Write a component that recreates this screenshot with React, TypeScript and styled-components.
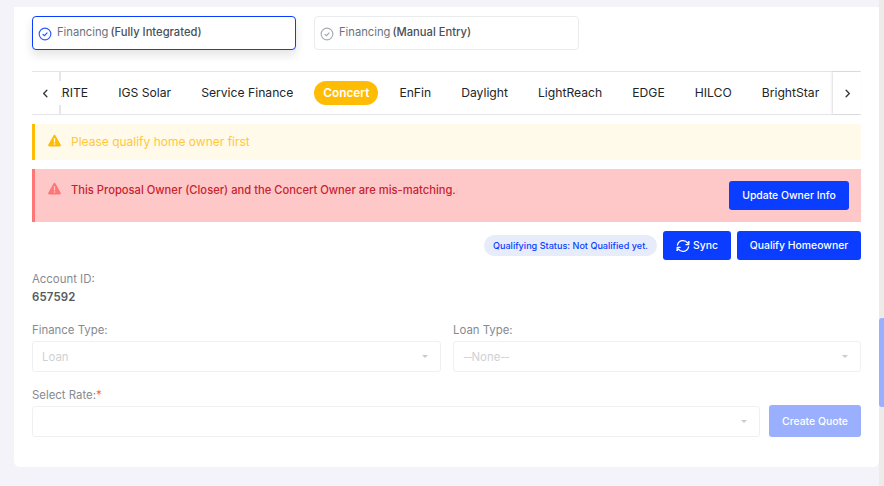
import React from "react";
import styled, { createGlobalStyle } from "styled-components";

const Global = createGlobalStyle`
  html, body { margin: 0; padding: 0; height: 486px; overflow: hidden; background: #f3f3f9; }
  * { box-sizing: border-box; }
  body { font-family: Inter, "Liberation Sans", sans-serif; }
`;

const Page = styled.div`
  display: flex;
  width: 884px;
  height: 486px;
  padding: 7px 0 19px 14px;
`;
const Card = styled.main`
  width: 865px;
  height: 460px;
  background: #fff;
  border-radius: 0 0 6px 6px;
  padding: 9px 18px 0;
  display: flex;
  flex-direction: column;
`;
const Scrollbar = styled.div`
  width: 5px;
  height: 486px;
  margin-top: -7px;
  background: #ecebe9;
  padding-top: 318px;
`;
const Thumb = styled.div`
  height: 89px;
  background: #9ab0ff;
  border-radius: 3px 0 0 3px;
`;
const Options = styled.div`
  display: flex;
  gap: 18px;
`;
const Option = styled.div<{ $active?: boolean }>`
  width: 265px;
  height: 34px;
  display: flex;
  align-items: center;
  gap: 5px;
  padding: 0 5px 2px 5px;
  border-radius: 4px;
  font-size: 11.2px;
  background: #fff;
  border: 1px solid ${(p) => (p.$active ? "#0a3dff" : "#e9ebec")};
  box-shadow: ${(p) => (p.$active ? "0 5px 10px rgba(30,32,37,.12)" : "none")};
  color: #6b7280;
  &:first-child { width: 264px; }
`;
const OptionIcon = styled.svg`
  width: 14px;
  height: 14px;
  margin-top: 3px;
  flex: none;
`;
const OptionBold = styled.span`
  color: #495057;
  font-weight: 500;
  margin-left: -3px;
`;
const TabBar = styled.nav`
  margin-top: 21px;
  height: 44px;
  border-top: 1px solid #e3e4e7;
  border-bottom: 1px solid #e3e4e7;
  display: flex;
  align-items: stretch;
`;
const Arrow = styled.div<{ $side: "left" | "right" }>`
  width: ${(p) => (p.$side === "left" ? 27 : 28)}px;
  flex: none;
  display: flex;
  align-items: center;
  justify-content: center;
  padding-left: ${(p) => (p.$side === "left" ? 0 : 1)}px;
  position: relative;
  z-index: 1;
  box-shadow: ${(p) => (p.$side === "right" ? "-1px 0 2px rgba(0,0,0,.14)" : "none")};
  background: #fff;
`;
const LeftEdge = styled.div`
  width: 2px;
  flex: none;
  background: linear-gradient(#e6e6e6 0 9px, #fff 9px 33px, #e6e6e6 33px);
`;
const TabTrack = styled.div`
  flex: 1;
  overflow: hidden;
  display: flex;
  align-items: center;
`;
const TabList = styled.div`
  display: flex;
  align-items: center;
  margin-left: -15px;
`;
const Tab = styled.div<{ $active?: boolean }>`
  font-size: ${(p) => (p.$active ? 11.8 : 12.16)}px;
  font-weight: ${(p) => (p.$active ? 600 : 400)};
  line-height: 24px;
  height: 24px;
  white-space: nowrap;
  padding: 0 9px;
  margin-right: 12px;
  border-radius: 12px;
  color: ${(p) => (p.$active ? "#fff" : "#212529")};
  background: ${(p) => (p.$active ? "#ffbc05" : "transparent")};
  flex: none;
`;
const Alert = styled.div<{ $tone: "warn" | "danger" }>`
  display: flex;
  justify-content: space-between;
  align-items: ${(p) => (p.$tone === "warn" ? "center" : "flex-start")};
  height: ${(p) => (p.$tone === "warn" ? 36 : 53)}px;
  margin-top: 9px;
  padding: ${(p) => (p.$tone === "warn" ? "0 12px 0 13px" : "12px 12px 0 13px")};
  background: ${(p) => (p.$tone === "warn" ? "#fffaea" : "#ffc8c8")};
  border-left: 3px solid ${(p) => (p.$tone === "warn" ? "#ffbc05" : "#ff7676")};
  color: ${(p) => (p.$tone === "warn" ? "#ffc83a" : "#c7232f")};
  font-size: ${(p) => (p.$tone === "warn" ? 12 : 11.2)}px;
  font-weight: ${(p) => (p.$tone === "warn" ? 400 : 500)};
`;
const AlertBody = styled.div`
  display: flex;
  align-items: center;
  gap: 10px;
  line-height: 18px;
`;
const AlertIcon = styled.svg`
  width: 13px;
  height: 13px;
  flex: none;
  margin-top: -4px;
`;
const Button = styled.button<{ $faded?: boolean }>`
  border: 0;
  border-radius: 3px;
  background: ${(p) => (p.$faded ? "#9ab0ff" : "#0a3dff")};
  color: #fff;
  font-family: inherit;
  font-size: 10.4px;
  font-weight: 500;
  white-space: nowrap;
  display: flex;
  align-items: center;
  justify-content: center;
  gap: 3px;
  padding: 0;
  flex: none;
`;
const UpdateButton = styled(Button)`
  width: 120px;
  height: 29px;
`;
const ActionRow = styled.div`
  margin-top: 9px;
  display: flex;
  justify-content: flex-end;
  align-items: center;
  gap: 6px;
`;
const Status = styled.span`
  height: 21px;
  line-height: 21px;
  width: 173px;
  text-align: center;
  background: #e7ecfb;
  color: #0a3dff;
  border-radius: 11px;
  font-size: 9.1px;
  font-weight: 500;
`;
const SyncButton = styled(Button)`
  width: 68px;
  height: 29px;
`;
const QualifyButton = styled(Button)`
  width: 124px;
  height: 29px;
`;
const Label = styled.div`
  font-size: 11.4px;
  line-height: 14px;
  color: #868a90;
`;
const Required = styled.span`
  color: #f06548;
`;
const Account = styled.div`
  margin-top: 12px;
`;
const AccountValue = styled.div`
  margin-top: 4px;
  font-size: 11.4px;
  font-weight: 600;
  line-height: 14px;
  color: #555b61;
  letter-spacing: 0.2px;
`;
const Row = styled.div`
  margin-top: 19px;
  display: grid;
  grid-template-columns: 409px 408px;
  gap: 12px;
`;
const Field = styled.div`
  display: flex;
  flex-direction: column;
  gap: 4px;
`;
const Select = styled.div`
  height: 31px;
  border: 1px solid #eff0f2;
  border-radius: 3px;
  display: flex;
  align-items: center;
  justify-content: space-between;
  padding: 0 12px 0 9px;
  font-size: 11.4px;
  color: #cfd1d4;
  background: #fff;
`;
const Dashes = styled.span`
  letter-spacing: -1px;
`;
const Caret = styled.span`
  width: 0;
  height: 0;
  border-left: 3px solid transparent;
  border-right: 3px solid transparent;
  border-top: 3px solid #c9cbce;
`;
const RateLabel = styled(Label)`
  margin-top: 16px;
`;
const RateRow = styled.div`
  margin-top: 3px;
  display: flex;
  gap: 9px;
  align-items: flex-end;
`;
const RateSelect = styled(Select)`
  flex: 1;
`;
const QuoteButton = styled(Button)`
  width: 92px;
  height: 32px;
`;

const CheckCircle = ({ color }: { color: string }) => (
  <OptionIcon viewBox="0 0 24 24" fill="none" stroke={color} strokeWidth="2">
    <circle cx="12" cy="12" r="10" />
    <path d="M8.500 12.500l2.500 2.500 4.500-5" strokeLinecap="round" strokeLinejoin="round" />
  </OptionIcon>
);
const Warning = ({ color }: { color: string }) => (
  <AlertIcon viewBox="0 0 24 24" fill={color}>
    <path fillRule="evenodd" d="M12 1.500c.8 0 1.500.4 1.900 1.100l9.600 17.200c.8 1.500-.2 3.200-1.900 3.200H2.400C.7 23-.3 21.300.5 19.800l9.600-17.200c.4-.7 1.100-1.100 1.900-1.100zM10.800 8v7.500h2.400V8zm0 9.300v2.400h2.400v-2.400z" />
  </AlertIcon>
);
const Chevron = ({ d }: { d: string }) => (
  <svg width="11" height="11" viewBox="0 0 12 12" fill="none" stroke="#343a40" strokeWidth="1.5">
    <path d={d} strokeLinecap="round" strokeLinejoin="round" />
  </svg>
);
const SyncIcon = () => (
  <svg width="14" height="14" viewBox="0 0 24 24" fill="none" stroke="#fff" strokeWidth="2.2" strokeLinecap="round" strokeLinejoin="round">
    <path d="M2.500 10.500A9.700 9.700 0 0 1 20 7l2-2.500" />
    <path d="M21.500 13.500A9.700 9.700 0 0 1 4 17l-2 2.500" />
    <path d="M22 4.500V9.500h-5" />
    <path d="M2 19.500V14.500h5" />
  </svg>
);

const tabs = ["LRITE", "IGS Solar", "Service Finance", "Concert", "EnFin", "Daylight", "LightReach", "EDGE", "HILCO", "BrightStar"];

export default function App() {
  return (
    <>
      <Global />
      <Page>
        <Card>
          <Options>
            <Option $active>
              <CheckCircle color="#2f5bff" />
              <span>Financing</span>
              <OptionBold>(Fully Integrated)</OptionBold>
            </Option>
            <Option>
              <CheckCircle color="#a9adb3" />
              <span>Financing</span>
              <OptionBold>(Manual Entry)</OptionBold>
            </Option>
          </Options>
          <TabBar>
            <Arrow $side="left"><Chevron d="M7.500 2.500L4 6l3.500 3.500" /></Arrow>
            <LeftEdge />
            <TabTrack>
              <TabList>
                {tabs.map((t) => (
                  <Tab key={t} $active={t === "Concert"}>{t}</Tab>
                ))}
              </TabList>
            </TabTrack>
            <Arrow $side="right"><Chevron d="M4.500 2.500L8 6l-3.500 3.500" /></Arrow>
          </TabBar>
          <Alert $tone="warn">
            <AlertBody>
              <Warning color="#ffbc05" />
              <span>Please qualify home owner first</span>
            </AlertBody>
          </Alert>
          <Alert $tone="danger">
            <AlertBody>
              <Warning color="#ff7676" />
              <span>This Proposal Owner (Closer) and the Concert Owner are mis-matching.</span>
            </AlertBody>
            <UpdateButton>Update Owner Info</UpdateButton>
          </Alert>
          <ActionRow>
            <Status>Qualifying Status: Not Qualified yet.</Status>
            <SyncButton><SyncIcon />Sync</SyncButton>
            <QualifyButton>Qualify Homeowner</QualifyButton>
          </ActionRow>
          <Account>
            <Label>Account ID:</Label>
            <AccountValue>657592</AccountValue>
          </Account>
          <Row>
            <Field>
              <Label>Finance Type:</Label>
              <Select>Loan<Caret /></Select>
            </Field>
            <Field>
              <Label>Loan Type:</Label>
              <Select><span><Dashes>--</Dashes>None<Dashes>--</Dashes></span><Caret /></Select>
            </Field>
          </Row>
          <RateLabel>Select Rate:<Required>*</Required></RateLabel>
          <RateRow>
            <RateSelect><span /><Caret /></RateSelect>
            <QuoteButton $faded>Create Quote</QuoteButton>
          </RateRow>
        </Card>
        <Scrollbar><Thumb /></Scrollbar>
      </Page>
    </>
  );
}
